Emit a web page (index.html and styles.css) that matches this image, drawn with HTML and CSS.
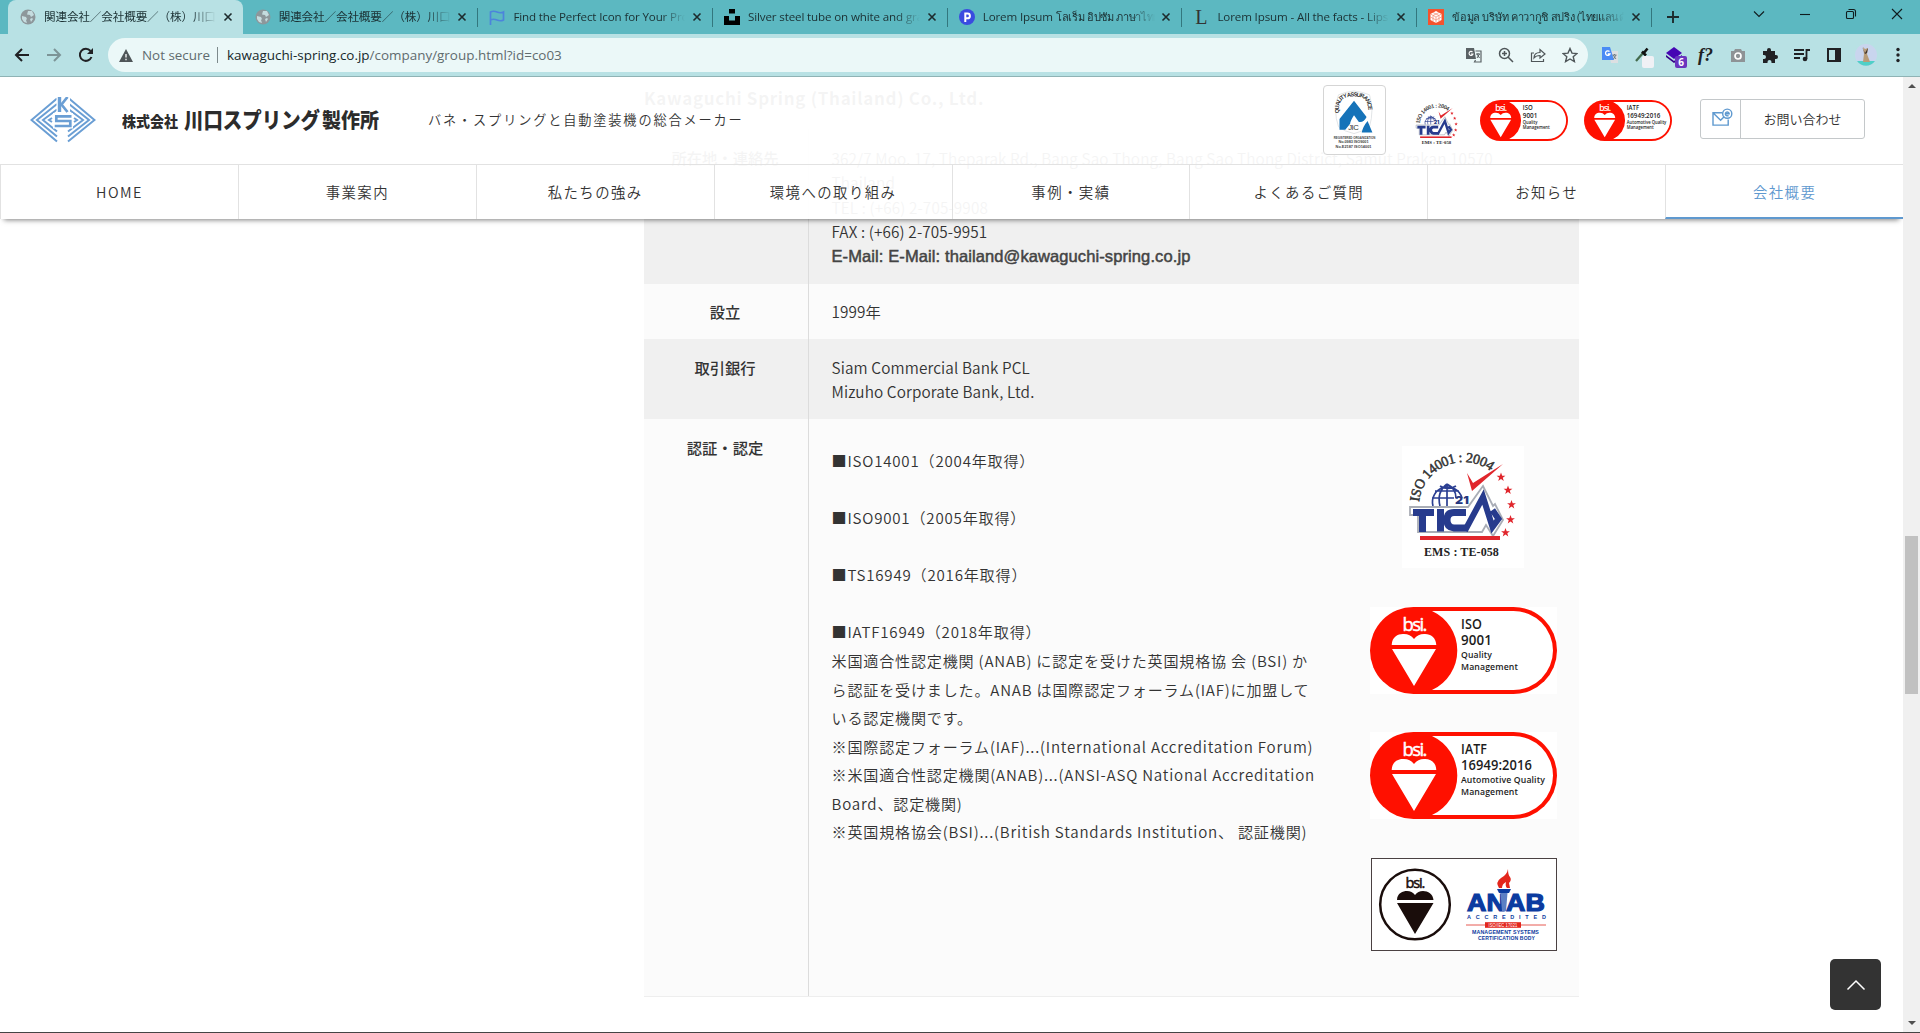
FILE: index.html
```html
<!DOCTYPE html>
<html lang="ja">
<head>
<meta charset="utf-8">
<title>関連会社／会社概要／（株）川口スプリング製作所</title>
<link rel="stylesheet" href="styles.css">
</head>
<body>
<svg class="defs" width="0" height="0">
  <symbol id="close" viewBox="0 0 10 10"><path d="M1.5 1.5l7 7M8.5 1.5l-7 7" fill="none" stroke="#1d2b2d" stroke-width="1.6"/></symbol>
  <symbol id="globe" viewBox="0 0 16 16"><circle cx="8" cy="8" r="7.5" fill="#8d979b"/><path d="M2 7l4 1 1 2-1 1 1 3-3-1-2-3zM8 2l4 0 2 4-3 2-1-2-3-.5z M10 10l2-1 1 1-2 3z" fill="#c5dcdf"/></symbol>
  <symbol id="star" viewBox="-5 -5 10 10"><path d="M0-4.4L1.2-1.3 4.4-1.3 1.8.7 2.8 3.9 0 2-2.8 3.9-1.8.7-4.4-1.3-1.2-1.3Z" fill="#e0262c"/></symbol>
  <symbol id="tica" viewBox="0 0 122 122">
    <path id="tica-arc" d="M17 56A45 45 0 0 1 91 27" fill="none"/>
    <text font-family="Liberation Serif,serif" font-size="14" fill="#333" stroke="#333" stroke-width=".5"><textPath href="#tica-arc" textLength="94">ISO 14001 : 2004</textPath></text>
    <path d="M30 60a15.500 15.500 0 1 1 31-5l-4 6z" fill="#fff"/>
    <g fill="none" stroke="#2b3f92" stroke-width="1.700"><path d="M31 60a15 15 0 1 1 29-8M30 52h22M33 45h24M45 38v22M45 38c-8 6-9 14-7 22M45 38c8 4 9 10 9 14M38 40c5 3 11 3 16 0"/></g>
    <text x="53" y="58" font-family="Inter,sans-serif" font-weight="900" font-size="11" fill="#26377f" textLength="14" lengthAdjust="spacingAndGlyphs">21</text>
    <path d="M8 61H66L81 40l10 20 2-2 8 16-10 16-7-11-4 7H16V69H8Z" fill="#fff" stroke="#a9adb6" stroke-width="1.800"/>
    <g fill="none" stroke="#273b8d"><path stroke-width="7" d="M11 66.500h21M20.500 66v20M38.500 63v22.500M64 66.500H52q-7 0-7 7.500t7 8H66"/><path stroke-width="6" d="M63 84.500L81 51l9.500 30 6-8-6-9"/></g>
    <path d="M65 27l6 10L101 18 70 45Z" fill="#e0262c"/>
    <use href="#star" x="94" y="26" width="10" height="10"/><use href="#star" x="101" y="39" width="10" height="10"/><use href="#star" x="104.500" y="53.500" width="10" height="10"/><use href="#star" x="103.500" y="68.500" width="10" height="10"/><use href="#star" x="98.500" y="81.500" width="10" height="10"/>
    <path d="M18 92h80" stroke="#e0262c" stroke-width="4"/>
    <text x="22" y="110" font-family="Liberation Serif,serif" font-weight="bold" font-size="12" fill="#222" textLength="75">EMS : TE-058</text>
  </symbol>
  <symbol id="bsi" viewBox="0 0 187 87">
    <rect width="187" height="87" rx="43.500" fill="#ff1000"/>
    <path d="M62 4h81.500a39.500 39.500 0 0 1 0 79H62A43.500 43.500 0 0 0 62 4Z" fill="#fff"/>
    <text x="32.500" y="24" font-family="Open Sans,sans-serif" font-size="18.500" font-weight="400" fill="#fff" stroke="#fff" stroke-width=".5" textLength="25">bsi.</text>
    <path d="M21.700 38C22 29 29 26.500 34 27q6 0 10 5 4-5 10-5c6-.5 12 3 12.300 11ZM22 42h44L44 79Z" fill="#fff"/>
  </symbol>
  <symbol id="iso9001" viewBox="0 0 187 87">
    <use href="#bsi" width="187" height="87"/>
    <g font-family="Open Sans,sans-serif" fill="#1c1c1c" font-weight="600"><text x="91" y="22" font-size="14" textLength="21" lengthAdjust="spacingAndGlyphs">ISO</text><text x="91" y="38" font-size="14.500" textLength="31" lengthAdjust="spacingAndGlyphs">9001</text><text x="91" y="50.500" font-size="9.500" textLength="31" lengthAdjust="spacingAndGlyphs">Quality</text><text x="91" y="62.500" font-size="9.500" textLength="57" lengthAdjust="spacingAndGlyphs">Management</text></g>
  </symbol>
  <symbol id="iatf" viewBox="0 0 187 87">
    <use href="#bsi" width="187" height="87"/>
    <g font-family="Open Sans,sans-serif" fill="#1c1c1c" font-weight="600"><text x="91" y="22" font-size="14" textLength="26" lengthAdjust="spacingAndGlyphs">IATF</text><text x="91" y="38" font-size="14.500" textLength="71" lengthAdjust="spacingAndGlyphs">16949:2016</text><text x="91" y="50.500" font-size="9.500" textLength="84" lengthAdjust="spacingAndGlyphs">Automotive Quality</text><text x="91" y="62.500" font-size="9.500" textLength="57" lengthAdjust="spacingAndGlyphs">Management</text></g>
  </symbol>
</svg>

<div class="tabstrip">
  <div class="tab active"><svg class="fav"><use href="#globe"/></svg><span class="t">関連会社／会社概要／（株）川口スプリング</span><svg class="x"><use href="#close"/></svg></div>
  <div class="tab"><svg class="fav"><use href="#globe"/></svg><span class="t">関連会社／会社概要／（株）川口スプリング</span><svg class="x"><use href="#close"/></svg></div>
  <div class="tab"><svg class="fav" viewBox="0 0 16 16"><path d="M1.500 16V3q3-1.500 6.500 0t6.500 0v8q-3 1.500-6.500 0t-6.500 0" fill="none" stroke="#4c84dc" stroke-width="1.700"/></svg><span class="t">Find the Perfect Icon for Your Project</span><svg class="x"><use href="#close"/></svg></div>
  <div class="tab"><svg class="fav" viewBox="0 0 16 16"><path d="M5 0h6v4.500H5zM0 7h5v4.500h6V7h5v9H0z"/></svg><span class="t">Silver steel tube on white and gray</span><svg class="x"><use href="#close"/></svg></div>
  <div class="tab"><svg class="fav" viewBox="0 0 16 16"><circle cx="8" cy="8" r="8" fill="#3a4be0"/><path d="M6.300 13V4.500h2.200a2.300 2.300 0 0 1 0 4.800H6.300" fill="none" stroke="#fff" stroke-width="2"/></svg><span class="t">Lorem Ipsum <span class="th">โลเร็ม อิปซัม ภาษาไทย</span></span><svg class="x"><use href="#close"/></svg></div>
  <div class="tab"><span class="fav fav-l">L</span><span class="t">Lorem Ipsum - All the facts - Lipsum</span><svg class="x"><use href="#close"/></svg></div>
  <div class="tab"><svg class="fav" viewBox="0 0 16 16"><rect width="16" height="16" fill="#f5532e"/><path d="M8 2l5.500 3v6L8 14l-5.500-3V5z" fill="#fff"/><path d="M2.500 5L8 8l5.500-3M8 8v6M5 3.500l6 3v6M11 3.500l-6 3v6M2.500 8L8 11l5.500-3" fill="none" stroke="#f5886d" stroke-width=".7"/></svg><span class="t"><span class="th">ข้อมูล บริษัท คาวากูชิ สปริง (ไทยแลนด์)</span></span><svg class="x"><use href="#close"/></svg></div>
  <svg class="plus" viewBox="0 0 14 14"><path d="M7 1v12M1 7h12" stroke="#1d2b2d" stroke-width="1.900"/></svg>
  <div class="winbtns">
    <svg viewBox="0 0 12 12"><path d="M1 3.500l5 5 5-5" /></svg>
    <svg viewBox="0 0 12 12"><path d="M1 6.500h10"/></svg>
    <svg viewBox="0 0 12 12"><rect x="1.500" y="3.500" width="7" height="7" rx="1"/><path d="M3.500 1.500h5q2 0 2 2v5"/></svg>
    <svg viewBox="0 0 12 12"><path d="M1 1l10 10M11 1L1 11"/></svg>
  </div>
</div>

<div class="toolbar">
  <div class="navicons">
    <svg viewBox="0 0 16 16" class="ic"><path d="M15 8H2M8 2L2 8l6 6" fill="none" stroke="#202124" stroke-width="2"/></svg>
    <svg viewBox="0 0 16 16" class="ic"><path d="M1 8h13M8 2l6 6-6 6" fill="none" stroke="#7c9497" stroke-width="2"/></svg>
    <svg viewBox="0 0 16 16" class="ic"><path d="M13.500 10A6 6 0 1 1 12.500 4" fill="none" stroke="#202124" stroke-width="2"/><path d="M15 1v6H9z" fill="#202124"/></svg>
  </div>
  <div class="omnibox">
    <svg class="warn" viewBox="0 0 14 13"><path d="M7 0l7 13H0z" fill="#4f5659"/><path d="M7 5v3.500M7 9.700v1.500" stroke="#fff" stroke-width="1.300"/></svg>
    <span class="ns">Not secure</span><span class="bar"></span><span class="url"><b>kawaguchi-spring.co.jp</b>/company/group.html?id=co03</span>
    <div class="oicons">
      <svg viewBox="0 0 16 16" class="ic"><path d="M0 1h8l2 11H0z" fill="#5a6265"/><path d="M9.500 4H15v11H8.500l1-2" fill="none" stroke="#5a6265" stroke-width="1.200"/><path d="M10 7h4M12 6v1M11 7l2.500 4M13.500 7L11 11" stroke="#5a6265"/><path d="M6.500 5A2 2 0 1 0 7 7H5" fill="none" stroke="#fff" stroke-width="1.100"/></svg>
      <svg viewBox="0 0 16 16" class="ic"><g fill="none" stroke="#4f5659" stroke-width="1.500"><circle cx="6.500" cy="6.500" r="5"/><path d="M10 10l5 5M4 6.500h5M6.500 4v5"/></g></svg>
      <svg viewBox="0 0 16 16" class="ic"><g fill="none" stroke="#4f5659" stroke-width="1.200"><path d="M4 6H1.500v8.500h12V12"/><path d="M4 11c0-4 3-5.500 6-5.500V2.500L15 7l-5 4V8.500C7 8.500 5.500 9 4 11z"/></g></svg>
      <svg viewBox="0 0 16 16" class="ic"><path d="M8 1.500l2 4.600 5 .4-3.800 3.200 1.200 4.900L8 12l-4.400 2.600 1.200-4.900L1 6.500l5-.4z" fill="none" stroke="#4f5659" stroke-width="1.400"/></svg>
    </div>
  </div>
  <div class="exts">
    <svg viewBox="0 0 16 16" class="ic"><path d="M7 4h9v12H9z" fill="#dcdfe2"/><path d="M0 0h8l4 13H0z" fill="#4a8bf5"/><path d="M7.500 4.500A2.300 2.300 0 1 0 8 7H5.800" fill="none" stroke="#fff" stroke-width="1.300"/><path d="M10.500 8h4M12.500 7v1M11 8l3 4M14 8l-2.500 4" stroke="#66747c" stroke-width=".9"/></svg>
    <div class="ext"><svg viewBox="0 0 16 16" class="ic"><path d="M2 14l7-8" stroke="#446b4d" stroke-width="2.200"/><path d="M8 4.500l4 4M9 7l4.500-5.500" stroke="#111" stroke-width="2.600"/></svg><i class="swatch"></i></div>
    <div class="ext"><svg viewBox="0 0 16 16" class="ic"><path d="M8 0l8 6-8 6-8-6z" fill="#4506b4"/><path d="M0 8l8 6 8-6v2l-8 6-8-6z" fill="#340187"/></svg><i class="badge">6</i></div>
    <span class="fq">f?</span>
    <svg viewBox="0 0 16 16" class="ic"><path d="M1 4h3l1-2h6l1 2h3v11H1z" fill="#8e9396"/><circle cx="8" cy="9" r="3" fill="#8e9396" stroke="#fff" stroke-width="1.700"/></svg>
    <svg viewBox="0 0 16 16" class="ic"><path d="M1 4h4V3a2 2 0 0 1 4 0v1h4v4h1a2 2 0 0 1 0 4h-1v4H9.500v-1a2 2 0 0 0-4 0v1H1v-4h1a2 2 0 0 0 0-4H1z" fill="#202124"/></svg>
    <svg viewBox="0 0 16 16" class="ic"><path d="M0 3h10M0 7h10M0 11h6M12.500 12V3H16" fill="none" stroke="#202124" stroke-width="1.800"/><circle cx="11" cy="12" r="2.300" fill="#202124"/></svg>
    <svg viewBox="0 0 16 16" class="ic"><path d="M2 2h12v12H2z" fill="none" stroke="#202124" stroke-width="2"/><path d="M9 2h5v12H9z" fill="#202124"/></svg>
    <svg viewBox="0 0 22 22" class="avatar"><circle cx="11" cy="11" r="11" fill="#c9d5ee"/><path d="M2 17h18a11 11 0 0 1-18 0z" fill="#4fd0c7"/><path d="M8 3l2 2 3-1-1 6 3 8H8l1-8z" fill="#b79c78"/><path d="M7 3l3 6 3-5-1 5-2 1z" fill="#40352c"/></svg>
    <svg viewBox="0 0 16 16" class="ic"><g fill="#202124"><circle cx="8" cy="2.500" r="1.700"/><circle cx="8" cy="8" r="1.700"/><circle cx="8" cy="13.500" r="1.700"/></g></svg>
  </div>
</div>

<div class="view">
  <div class="page">
    <header class="head">
      <div class="top">
        <svg class="mark" viewBox="0 0 66 46">
          <g fill="none" stroke="#6a9ed4" stroke-width="2"><path d="M27 1.500L1.500 23 27 44.500M27 7L7 23l20 16.500M27 12.500L13 23l14 11.500M39 1.500L64.500 23 38 44.500M39 7l20 16-21 16.500M39 12.500L53 23 38 34.500"/><path d="M22 21l-3 2 3 2M44 21l3 2-3 2"/></g>
          <path d="M23 16h20v15.500H23zM26.500 0h13.500v16H26.500zM28 30h9v16h-9z" fill="#fff"/>
          <path d="M29.500 0v15" fill="none" stroke="#6a9ed4" stroke-width="3.400"/>
          <g fill="none" stroke="#6a9ed4" stroke-width="2.700"><path d="M37.500 0l-6 7.500 6 7.500M41.500 19.300H26.300v4.700h14v5H24.700"/></g>
        </svg>
        <svg class="name" width="258" height="30" viewBox="0 0 258 30"><g font-family="Noto Sans CJK JP,sans-serif" font-weight="900" fill="#2c2c2c"><text x="0" y="21.500" font-size="15" textLength="56" lengthAdjust="spacingAndGlyphs">株式会社</text><text x="62" y="22.500" font-size="22" textLength="136" lengthAdjust="spacingAndGlyphs">川口スプリング</text><text x="200" y="22.500" font-size="20.500" textLength="57" lengthAdjust="spacingAndGlyphs">製作所</text></g></svg>
        <span class="tagline">バネ・スプリングと自動塗装機の総合メーカー</span>
        <div class="marks">
          <svg class="jic" viewBox="0 0 63 70">
            <path d="M31 5q9 1 16 4 5 16 0 33-7 5-16 7-10-2-16-7-6-17 0-33 7-3 16-4z" fill="none" stroke="#d9dde0" stroke-width=".8"/>
            <path id="jic-arc" d="M16 28V20Q17 13 24 11.500 31 9.500 39 12 46 15 46 28" fill="none"/>
            <text font-family="Liberation Sans,sans-serif" font-weight="bold" font-size="6" fill="#333"><textPath href="#jic-arc" textLength="51">QUALITY ASSURANCE</textPath></text>
            <path d="M31 15l13 17q-3 6-8 5l-5-7q-4 6-4 9l-5 6h-6V34zM45 36l5 12H39q1-6 6-12z" fill="#1673b9"/>
            <text x="25" y="45" font-size="8" font-family="Liberation Sans,sans-serif" fill="#333" textLength="11">JIC</text>
            <g font-size="4" font-family="Liberation Sans,sans-serif" font-weight="bold" fill="#444"><text x="10" y="54.500" textLength="43" lengthAdjust="spacingAndGlyphs">REGISTERED ORGANIZATION</text><text x="15" y="59" textLength="31">No.0983 ISO9001</text><text x="12" y="64" textLength="37">No.E2187 ISO14001</text></g>
          </svg>
          <svg class="tica-s"><use href="#tica"/></svg>
          <svg class="bsi-s"><use href="#iso9001"/></svg>
          <svg class="bsi-s second"><use href="#iatf"/></svg>
          <a class="contact"><span class="mail"><svg viewBox="0 0 22 20"><g fill="none" stroke="#5f99cf" stroke-width="1.500"><path d="M11 5H1v13h16v-6M1.500 5.500L9 13l4-4"/><circle cx="16" cy="6" r="4.800"/><path d="M14 6h4a2 2 0 1 0-.7 1.800"/></g></svg></span><span class="clabel">お問い合わせ</span></a>
        </div>
      </div>
      <nav class="nav"><a>HOME</a><a>事業案内</a><a>私たちの強み</a><a>環境への取り組み</a><a>事例・実績</a><a>よくあるご質問</a><a>お知らせ</a><a class="on">会社概要</a></nav>
    </header>

    <main class="main">
      <h2>Kawaguchi Spring (Thailand) Co., Ltd.</h2>
      <dl class="rows">
        <div class="row r1"><dt>所在地・連絡先</dt><dd>362/7 Moo. 17, Theparak Rd., Bang Sao Thong, Bang Sao Thong District, Samut Prakan 10570<br>Thailand<br>TEL : (+66) 2-705-9908<br>FAX : (+66) 2-705-9951<br><span class="mailtxt">E-Mail: E-Mail: thailand@kawaguchi-spring.co.jp</span></dd></div>
        <div class="row r2"><dt>設立</dt><dd>1999年</dd></div>
        <div class="row r3"><dt>取引銀行</dt><dd>Siam Commercial Bank PCL<br>Mizuho Corporate Bank, Ltd.</dd></div>
        <div class="row r4"><dt>認証・認定</dt><dd>
          <p class="cert">■ISO14001（2004年取得）<br><br>■ISO9001（2005年取得）<br><br>■TS16949（2016年取得）<br><br>■IATF16949（2018年取得）<br>米国適合性認定機関 (ANAB) に認定を受けた英国規格協 会 (BSI) か<br>ら認証を受けました。ANAB は国際認定フォーラム(IAF)に加盟して<br>いる認定機関です。<br>※国際認定フォーラム(IAF)...(International Accreditation Forum)<br>※米国適合性認定機関(ANAB)...(ANSI-ASQ National Accreditation<br>Board、認定機関)<br>※英国規格協会(BSI)...(British Standards Institution、 認証機関)</p>
          <div class="pics">
            <svg class="tica-b"><use href="#tica"/></svg>
            <svg class="bsi-b"><use href="#iso9001"/></svg>
            <svg class="bsi-b"><use href="#iatf"/></svg>
            <svg class="anab" viewBox="0 0 186 93">
              <rect x=".5" y=".5" width="185" height="92" fill="#fff" stroke="#4a4142"/>
              <circle cx="44" cy="46.500" r="34.800" fill="none" stroke="#1a0d0b" stroke-width="2.500"/>
              <text x="34.500" y="29.500" font-family="Open Sans,sans-serif" font-size="14.500" font-weight="400" fill="#1a0d0b" stroke="#1a0d0b" stroke-width=".5" textLength="20">bsi.</text>
              <path d="M26 42C26 35 32 33 36 33q5 0 8 4 3-4 8-4c5 0 10 3 10.500 9ZM26 45h36.500L44 76Z" fill="#1a0d0b"/>
              <g font-family="Liberation Sans,Arial,sans-serif" fill="#0b3ba0" font-weight="bold">
                <text x="96" y="53" font-size="24" font-weight="900" stroke="#0b3ba0" stroke-width="1.200" textLength="78" lengthAdjust="spacingAndGlyphs">ANAB</text>
                <text x="96" y="60.500" font-size="5.500" textLength="79">ACCREDITED</text>
                <text x="101" y="76" font-size="5.300" textLength="67" lengthAdjust="spacingAndGlyphs">MANAGEMENT SYSTEMS</text>
                <text x="107" y="82" font-size="5.300" textLength="57" lengthAdjust="spacingAndGlyphs">CERTIFICATION BODY</text>
              </g>
              <path d="M129.500 35h7l-1.500 18h-4z" fill="#5c7fc4"/>
              <path d="M126 31h14l-2 4h-10z" fill="#0b3ba0"/>
              <path d="M128 30q-4-6 2-10 6-3 7-9 0 6 2 8 2 3-1 6l1 5z" fill="#e3261c"/><path d="M131 30q0-4 4-6-1 4 1 6z" fill="#fff"/>
              <path d="M95 67h80" stroke="#e3473f" stroke-width=".9"/><rect x="114" y="64.200" width="36" height="5.600" fill="#e3261c"/>
              <text x="117.500" y="69" font-family="Liberation Sans,sans-serif" font-size="5" fill="#fff" textLength="29" lengthAdjust="spacingAndGlyphs">ISO/IEC 17021</text>
            </svg>
          </div>
        </dd></div>
      </dl>
    </main>
    <a class="totop"><svg viewBox="0 0 20 12"><path d="M1.500 10.500L10 2l8.500 8.500" fill="none" stroke="#fff" stroke-width="1.500"/></svg></a>
  </div>
  <div class="scroll"><i class="up"></i><i class="thumb"></i><i class="down"></i></div>
</div>
</body>
</html>
```

FILE: styles.css
```css
* { box-sizing: border-box; }
body {
  margin: 0; width: 1920px; height: 1033px; overflow: hidden;
  display: flex; flex-direction: column; background: #fff; color: #333;
  font-family: "Noto Sans CJK JP", sans-serif; font-weight: 350;
}
svg { display: block; flex: none; }
.defs { position: absolute; }

/* browser tabs */
.tabstrip {
  height: 34px; flex: none; background: #5cb8c1; display: flex; align-items: center;
  padding-left: 8px; font: 12px "Open Sans", "Noto Sans CJK JP", sans-serif; color: #1b3033;
}
.tab {
  width: 234.7px; height: 34px; flex: none; display: flex; align-items: center;
  padding: 0 10px 0 12px; position: relative;
}
.tab::after {
  content: ""; position: absolute; right: -1px; top: 8px; width: 1px; height: 19px; background: #33777e;
}
.tab.active { background: #b8e1e4; border-radius: 8px 8px 0 0; }
.tab.active::after { display: none; }
.fav { width: 16px; height: 16px; flex: none; }
.fav-l { font: 20px/16px "Liberation Serif", serif; text-align: center; color: #333; }
.t {
  width: 172px; margin-left: 8px; white-space: nowrap; overflow: hidden; line-height: 24px;
  font-size: 11.6px; letter-spacing: -.14px;
  -webkit-mask-image: linear-gradient(90deg, #000 86%, transparent);
  mask-image: linear-gradient(90deg, #000 86%, transparent);
}
.th { font-size: 11px; letter-spacing: -.3px; }
.x { width: 10px; height: 10px; margin-left: auto; }
.plus { width: 14px; height: 14px; margin-left: 15px; }
.winbtns { display: flex; gap: 34px; margin: -6px 17px 0 auto; }
.winbtns svg { width: 12px; height: 12px; fill: none; stroke: #101c1e; stroke-width: 1.1; }

/* address bar */
.toolbar {
  height: 43px; flex: none; background: #b8e1e4; border-bottom: 1px solid #8fb3b5;
  display: flex; align-items: center; padding: 0 14px;
}
.ic { width: 16px; height: 16px; }
.navicons { display: flex; gap: 16px; width: 94px; }
.omnibox {
  width: 1480px; height: 34px; border-radius: 17px; background: #ebf8f8;
  display: flex; align-items: center; padding: 0 10px 0 11px;
  font: 14px "Open Sans", sans-serif; color: #5f6b6e;
}
.warn { width: 14px; height: 13px; }
.ns { width: 69px; margin-left: 9px; font-size: 13.4px; white-space: nowrap; }
.bar { width: 1px; height: 16px; background: #7d8a8c; margin: 0 9px 0 6px; }
.url { font-size: 13.45px; white-space: nowrap; }
.url b { font-weight: 400; color: #16282b; }
.oicons { display: flex; gap: 16px; margin-left: auto; }
.exts { display: flex; align-items: center; gap: 16px; margin-left: 14px; }
.ext { position: relative; }
.swatch { position: absolute; left: 8px; top: 9px; width: 12px; height: 12px; border-radius: 2px; background: #f0f1f5; }
.badge {
  position: absolute; left: 9px; top: 9px; width: 12px; height: 12px; border-radius: 2px;
  background: #6a35bf; color: #fff; font: bold 10px/12px "Open Sans", sans-serif; text-align: center;
}
.fq { width: 16px; font: italic bold 18px/20px "Liberation Serif", serif; color: #202124; }
.avatar { width: 22px; height: 22px; margin: 0 -3px; }

/* page viewport */
.view { flex: 1; display: flex; border-bottom: 1px solid #444; }
.page { width: 1903px; position: relative; overflow: hidden; }
.scroll {
  width: 17px; background: #f0f0f0; display: flex; flex-direction: column; align-items: center; padding: 7px 0;
}
.up, .down { border: 4px solid transparent; border-top: 0; border-bottom: 4px solid #505050; }
.down { border-bottom: 0; border-top: 4px solid #505050; margin-top: auto; }
.thumb { width: 13px; height: 158px; margin-top: 448px; background: #c1c1c1; }

/* sticky header over the page */
.head {
  position: absolute; z-index: 2; left: 0; top: 0; width: 100%; height: 142px;
  background: rgba(255, 255, 255, .95); box-shadow: 0 5px 5px -4px rgba(0, 0, 0, .5);
}
.top { height: 87px; display: flex; align-items: center; padding: 0 38px 0 30px; }
.mark { width: 66px; height: 46px; margin-top: -2px; }
.name { margin-left: 26px; margin-top: -2px; }
.tagline { margin: -3px 0 0 48px; font-size: 13.2px; letter-spacing: 1.84px; white-space: nowrap; }
.marks { display: flex; align-items: center; margin-left: auto; }
.jic { width: 63px; height: 70px; margin-top: -2px; border: 1px solid #d5d5d5; border-radius: 4px; background: #fff; }
.tica-s { width: 48px; height: 48px; margin: 9px 19px 0 27px; }
.bsi-s { width: 88px; height: 41px; }
.second { margin-left: 16px; }
.contact {
  width: 165px; height: 40px; margin: -3px 0 0 28px; display: flex; border: 1px solid #c4c8ca;
  border-radius: 3px; background: #fff;
}
.mail { width: 40px; border-right: 1px solid #c4c8ca; display: flex; align-items: center; justify-content: center; }
.mail svg { width: 21px; height: 19px; margin: -4px 0 0 3px; }
.clabel { flex: 1; text-align: center; font-size: 13px; line-height: 38px; }
.nav { height: 55px; display: flex; border-top: 1px solid #e2e2e2; }
.nav a {
  flex: 1; text-align: center; font-size: 14.4px; letter-spacing: 1.44px; line-height: 54px;
  border-left: 1px solid #e2e2e2;
}
.nav .on { color: #5f99cf; border-bottom: 2px solid #5f99cf; }

/* company details */
.main { width: 935px; margin-left: 644px; }
h2 { margin: 0; padding-top: 7px; height: 52px; font-size: 17px; line-height: 28px; letter-spacing: .68px; font-weight: 700; }
.rows { margin: 0; border-bottom: 1px solid #eee; font-size: 15.3px; line-height: 24.48px; }
.row { display: flex; background: #fbfbfb; }
.r1, .r3 { background: #f0f0f0; }
.r1 { height: 155px; }
.r2 { height: 55px; }
.r3 { height: 80px; }
.r4 { height: 577px; }
dt { width: 165px; padding: 16px 2px 0 0; text-align: center; font-weight: 500; border-right: 1px solid #dcdcdc; }
dd { flex: 1; margin: 0; padding: 16px 22px 0 22.5px; display: block; white-space: nowrap; letter-spacing: .13px; }
.r1 dd { padding-top: 17px; }
.r2 dt, .r2 dd { padding-top: 15px; }
.mailtxt {
  font: 16.5px/20px "Liberation Sans", sans-serif; color: #444; -webkit-text-stroke: .5px #444;
  letter-spacing: .1px; position: relative; top: -1px;
}
.r4 dd { display: flex; padding-top: 27px; }
.cert { margin: 0; font-size: 15.1px; line-height: 28.56px; letter-spacing: .79px; }
.pics { width: 187px; flex: none; margin-left: auto; display: flex; flex-direction: column; align-items: center; gap: 38.7px; }
.tica-b { width: 122px; height: 122px; margin-left: -1px; background: #fff; }
.bsi-b { width: 187px; height: 87px; background: #fff; }
.anab { width: 186px; height: 93px; }
.totop {
  position: absolute; right: 22px; top: 882px; width: 51px; height: 51px; border-radius: 5px;
  background: #333; display: flex; align-items: center; justify-content: center;
}
.totop svg { width: 20px; height: 12px; }
```
